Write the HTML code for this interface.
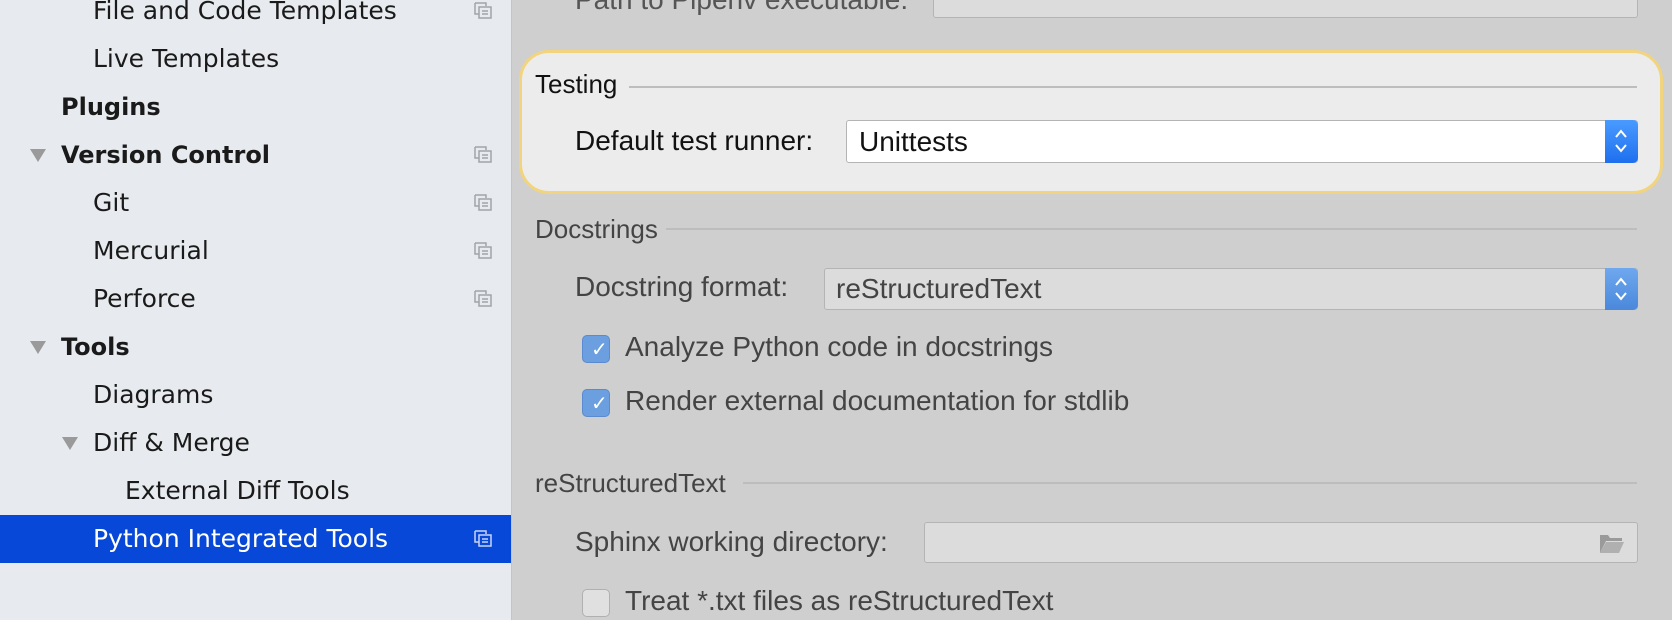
<!DOCTYPE html>
<html><head><meta charset="utf-8"><style>
*{margin:0;padding:0;box-sizing:border-box}
body{width:1672px;height:620px;overflow:hidden;position:relative;background:#cfcfcf;font-family:"Liberation Sans",sans-serif;color:#1a1a1a}
#side{position:absolute;left:0;top:0;width:512px;height:620px;background:#e7ebef;border-right:1px solid #c4c4c4}
.r{position:absolute;left:0;width:511px;height:48px;line-height:48px;font-size:25px;font-family:"DejaVu Sans",sans-serif}
.b{font-weight:bold;font-size:24px}
.tri{position:absolute;width:0;height:0;border-left:8px solid transparent;border-right:8px solid transparent;border-top:13px solid #9a9a9a;top:18px}
.ic{position:absolute;left:474px;top:15px;width:18px;height:17px}
.sel{background:#0848d8;color:#fff}
#main{position:absolute;left:512px;top:0;right:0;height:620px}
.abs{position:absolute}
.t{font-size:28px;white-space:nowrap;color:#444}
.line{position:absolute;height:2px;background:#bdbdbd}
.field{position:absolute;border:1px solid #b4b4b4;background:#dcdcdc;border-radius:3px}
.btn{position:absolute;right:-1px;top:-1px;bottom:-1px;width:33px;background:linear-gradient(#4a9bff,#1f6fee);border-radius:0 5px 5px 0}
.btn svg{position:absolute;left:9px;top:8px}
.cb{position:absolute;width:28px;height:28px;border-radius:5px;background:#6b9fe0;border:1px solid #5a8ad0}
</style></head><body>
<div id="side">
 <div class="r" style="top:-13px"><span class="abs" style="left:93px">File and Code Templates</span><svg class="ic" viewBox="0 0 18 17"><g fill="none" stroke="#a0a4a8" stroke-width="1.5"><path d="M1 1h11v3"/><path d="M1 1v11h4"/><rect x="5" y="5" width="12" height="11"/><path d="M8 9h6M8 12h6"/></g></svg></div>
 <div class="r" style="top:35px"><span class="abs" style="left:93px">Live Templates</span></div>
 <div class="r b" style="top:83px"><span class="abs" style="left:61px">Plugins</span></div>
 <div class="r b" style="top:131px"><div class="tri" style="left:30px"></div><span class="abs" style="left:61px">Version Control</span><svg class="ic" viewBox="0 0 18 17"><g fill="none" stroke="#a0a4a8" stroke-width="1.5"><path d="M1 1h11v3"/><path d="M1 1v11h4"/><rect x="5" y="5" width="12" height="11"/><path d="M8 9h6M8 12h6"/></g></svg></div>
 <div class="r" style="top:179px"><span class="abs" style="left:93px">Git</span><svg class="ic" viewBox="0 0 18 17"><g fill="none" stroke="#a0a4a8" stroke-width="1.5"><path d="M1 1h11v3"/><path d="M1 1v11h4"/><rect x="5" y="5" width="12" height="11"/><path d="M8 9h6M8 12h6"/></g></svg></div>
 <div class="r" style="top:227px"><span class="abs" style="left:93px">Mercurial</span><svg class="ic" viewBox="0 0 18 17"><g fill="none" stroke="#a0a4a8" stroke-width="1.5"><path d="M1 1h11v3"/><path d="M1 1v11h4"/><rect x="5" y="5" width="12" height="11"/><path d="M8 9h6M8 12h6"/></g></svg></div>
 <div class="r" style="top:275px"><span class="abs" style="left:93px">Perforce</span><svg class="ic" viewBox="0 0 18 17"><g fill="none" stroke="#a0a4a8" stroke-width="1.5"><path d="M1 1h11v3"/><path d="M1 1v11h4"/><rect x="5" y="5" width="12" height="11"/><path d="M8 9h6M8 12h6"/></g></svg></div>
 <div class="r b" style="top:323px"><div class="tri" style="left:30px"></div><span class="abs" style="left:61px">Tools</span></div>
 <div class="r" style="top:371px"><span class="abs" style="left:93px">Diagrams</span></div>
 <div class="r" style="top:419px"><div class="tri" style="left:62px"></div><span class="abs" style="left:93px">Diff &amp; Merge</span></div>
 <div class="r" style="top:467px"><span class="abs" style="left:125px">External Diff Tools</span></div>
 <div class="r sel" style="top:515px"><span class="abs" style="left:93px">Python Integrated Tools</span><svg class="ic" viewBox="0 0 18 17"><g fill="none" stroke="#c8d4f0" stroke-width="1.5"><path d="M1 1h11v3"/><path d="M1 1v11h4"/><rect x="5" y="5" width="12" height="11"/><path d="M8 9h6M8 12h6"/></g></svg></div>
</div>
<div id="main">
 <div class="abs t" style="left:63px;top:-16px;color:#555">Path to Pipenv executable:</div>
 <div class="field" style="left:421px;top:-5px;width:705px;height:23px"></div>
 <div class="abs" style="left:7px;top:50px;width:1144px;height:144px;background:#ececec;border:3px solid #f2d47e;border-radius:30px"></div>
 <div class="abs t" style="left:23px;top:69px;color:#111;font-size:26px">Testing</div>
 <div class="line" style="left:117px;top:86px;width:1008px"></div>
 <div class="abs t" style="left:63px;top:125px;color:#111">Default test runner:</div>
 <div class="field" style="left:334px;top:120px;width:792px;height:43px;background:#fff"><div class="btn"><svg width="14" height="26" viewBox="0 0 14 26"><path d="M2 9l5-6 5 6M2 17l5 6 5-6" fill="none" stroke="#fff" stroke-width="2"/></svg></div><span class="abs t" style="left:12px;top:5px;color:#111">Unittests</span></div>
 <div class="abs t" style="left:23px;top:214px;font-size:26px">Docstrings</div>
 <div class="line" style="left:154px;top:228px;width:971px"></div>
 <div class="abs t" style="left:63px;top:271px">Docstring format:</div>
 <div class="field" style="left:312px;top:268px;width:814px;height:42px"><div class="btn" style="background:linear-gradient(#6fa8ee,#4a88dc)"><svg width="14" height="26" viewBox="0 0 14 26"><path d="M2 9l5-6 5 6M2 17l5 6 5-6" fill="none" stroke="#fff" stroke-width="2"/></svg></div><span class="abs t" style="left:11px;top:4px">reStructuredText</span></div>
 <div class="cb" style="left:70px;top:335px"></div><div class="abs" style="left:79px;top:337px;color:#fff;font-size:20px">✓</div>
 <div class="abs t" style="left:113px;top:331px">Analyze Python code in docstrings</div>
 <div class="cb" style="left:70px;top:389px"></div><div class="abs" style="left:79px;top:391px;color:#fff;font-size:20px">✓</div>
 <div class="abs t" style="left:113px;top:385px">Render external documentation for stdlib</div>
 <div class="abs t" style="left:23px;top:468px;font-size:26px">reStructuredText</div>
 <div class="line" style="left:231px;top:482px;width:894px"></div>
 <div class="abs t" style="left:63px;top:526px">Sphinx working directory:</div>
 <div class="field" style="left:412px;top:522px;width:714px;height:41px"><svg class="abs" style="right:12px;top:11px" width="26" height="20" viewBox="0 0 26 20"><path d="M1 1h8l2 3h12v3H7L1 19z" fill="#9a9a9a"/><path d="M7 8h18l-5 11H1z" fill="#b0b0b0"/></svg></div>
 <div class="cb" style="left:70px;top:589px;background:#e0e0e0;border-color:#b0b0b0"></div>
 <div class="abs t" style="left:113px;top:585px">Treat *.txt files as reStructuredText</div>
</div>
</body></html>
